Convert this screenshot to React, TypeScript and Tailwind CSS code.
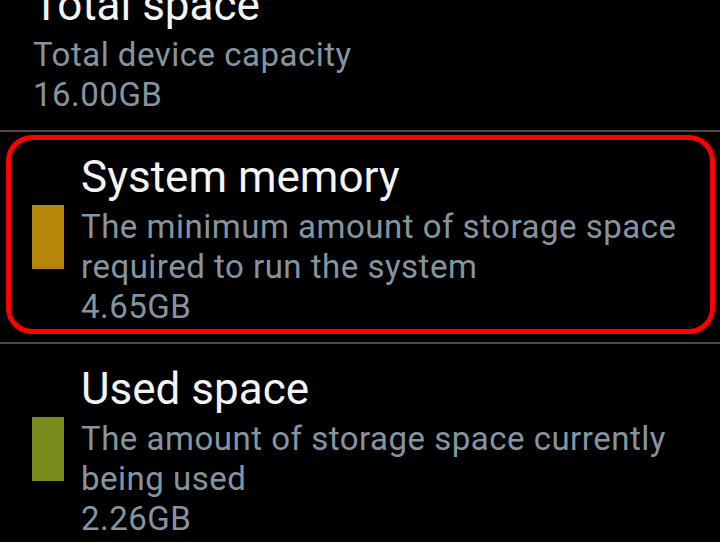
const items = [
  {
    title: 'Total space',
    lines: ['Total device capacity', '16.00GB'],
    swatch: null as string | null,
    highlight: false,
  },
  {
    title: 'System memory',
    lines: ['The minimum amount of storage space', 'required to run the system', '4.65GB'],
    swatch: 'bg-[#b8860b]',
    highlight: true,
  },
  {
    title: 'Used space',
    lines: ['The amount of storage space currently', 'being used', '2.26GB'],
    swatch: 'bg-[#7b8a1d]',
    highlight: false,
  },
];

function StorageRow({ item }: { item: (typeof items)[number] }) {
  return (
    <div className="relative flex items-center pl-8 pt-[21px] pb-[15px]">
      {item.swatch && (
        <div className="w-8 shrink-0 -mt-[6px]">
          <div className={`w-8 h-16 ${item.swatch}`} />
        </div>
      )}
      <div className={`flex flex-col ${item.swatch ? 'ml-[17px]' : 'ml-[1px]'}`}>
        <div className="text-[44px] leading-[48px] text-[#f4f4f4] mb-[6px]">{item.title}</div>
        {item.lines.map((line) => (
          <div key={line} className="text-[33px] leading-[40px] tracking-[0.5px] text-[#8595a0]">
            {line}
          </div>
        ))}
      </div>
      {/* annotation frame drawn over the row */}
      {item.highlight && (
        <div className="pointer-events-none absolute top-[3px] bottom-[8px] left-[6px] right-[5px] rounded-[26px] border-[5px] border-[#ff0000]" />
      )}
    </div>
  );
}

export default function App() {
  return (
    <div
      className="w-[720px] h-[542px] overflow-hidden bg-black"
      style={{ fontFamily: 'Roboto, "Noto Sans", sans-serif' }}
    >
      <div className="-mt-[40px]">
        {items.map((item, i) => (
          <div key={item.title}>
            {i > 0 && <div className="h-[2px] bg-[#4a4a4a]" />}
            <StorageRow item={item} />
          </div>
        ))}
      </div>
    </div>
  );
}
